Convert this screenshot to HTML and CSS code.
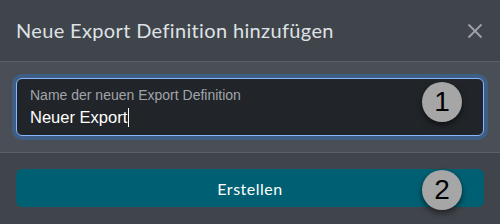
FILE: index.html
```html
<!DOCTYPE html>
<html lang="de">
  <head>
    <meta charset="UTF-8" />
    <meta name="viewport" content="width=device-width, initial-scale=1.0" />
    <title>Neue Export Definition</title>
    <link rel="stylesheet" href="styles.css">
  </head>
  <body>
    <div class="modal">
      <div class="modal-header">
        <h5 class="modal-title">Neue Export Definition hinzufügen</h5>
        <button class="btn-close" aria-label="Schließen">
          <svg width="16" height="16" viewBox="0 0 16 16">
            <path d="M1.5 1.5L14.5 14.5M14.5 1.5L1.5 14.5" stroke="currentColor" stroke-width="1.8" fill="none" />
          </svg>
        </button>
      </div>
      <div class="modal-body">
        <div class="form-floating">
          <label for="export_name">Name der neuen Export Definition</label>
          <div class="value" id="export_name">Neuer Export<span class="caret"></span></div>
          <span class="badge">1</span>
        </div>
      </div>
      <div class="modal-footer">
        <button class="button">Erstellen</button>
        <span class="badge">2</span>
      </div>
    </div>
  </body>
</html>
```

FILE: styles.css
```css
body {
  margin: 0;
  padding: 0;
  background-color: #40444b;
  font-family: Lato, "Liberation Sans", sans-serif;
  color: #dee2e6;
}
.modal {
  width: 500px;
  height: 224px;
  overflow: hidden;
}
.modal-header {
  display: flex;
  align-items: center;
  justify-content: space-between;
  height: 62px;
  padding: 0 16px;
  box-sizing: border-box;
  border-bottom: 1px solid #5b5f66;
  background-color: #40444b;
}
.modal-title {
  margin: 0 0 1px;
  font-size: 20px;
  font-weight: 400;
  color: #dee2e6;
  letter-spacing: 0.35px;
}
.btn-close {
  border: none;
  background: none;
  padding: 0;
  color: #9ea2a8;
  width: 16px;
  height: 16px;
  margin-right: 1px;
  cursor: pointer;
}
.btn-close svg {
  display: block;
}
.modal-body {
  padding: 16px;
  background-color: #4a4e56;
  border-bottom: 1px solid #5b5f66;
}
.form-floating {
  position: relative;
  height: 58px;
  box-sizing: border-box;
  padding: 8px 13px 0;
  background-color: #212529;
  border: 1px solid #86b7fe;
  border-radius: 6px;
  box-shadow: 0 0 0 4px rgba(60, 100, 150, 0.75);
  font-family: "Liberation Sans", Arial, sans-serif;
}
.form-floating label {
  display: block;
  font-size: 14px;
  color: #a0a4aa;
  line-height: 17px;
}
.value {
  font-size: 16.5px;
  line-height: 20px;
  margin-top: 3px;
  color: #ffffff;
}
.caret {
  display: inline-block;
  width: 1px;
  height: 19px;
  margin-left: 1px;
  background-color: #ffffff;
  vertical-align: -4px;
}
.modal-footer {
  position: relative;
  padding: 16px;
  background-color: #40444b;
}
.button {
  display: block;
  width: 100%;
  height: 38px;
  border: none;
  border-radius: 6px;
  background-color: #006073;
  color: #ffffff;
  font-family: Lato, "Liberation Sans", sans-serif;
  font-size: 16px;
  letter-spacing: 0.5px;
  cursor: pointer;
}
.badge {
  position: absolute;
  width: 40px;
  height: 40px;
  border-radius: 50%;
  background-color: #a6a6a6;
  color: #000000;
  font-family: "Liberation Sans", Arial, sans-serif;
  font-size: 28px;
  line-height: 40px;
  text-align: center;
  box-shadow: 0 3px 6px rgba(0, 0, 0, 0.55);
}
.form-floating .badge {
  left: 405px;
  top: 3px;
}
.modal-footer .badge {
  left: 422px;
  top: 17px;
}
```
